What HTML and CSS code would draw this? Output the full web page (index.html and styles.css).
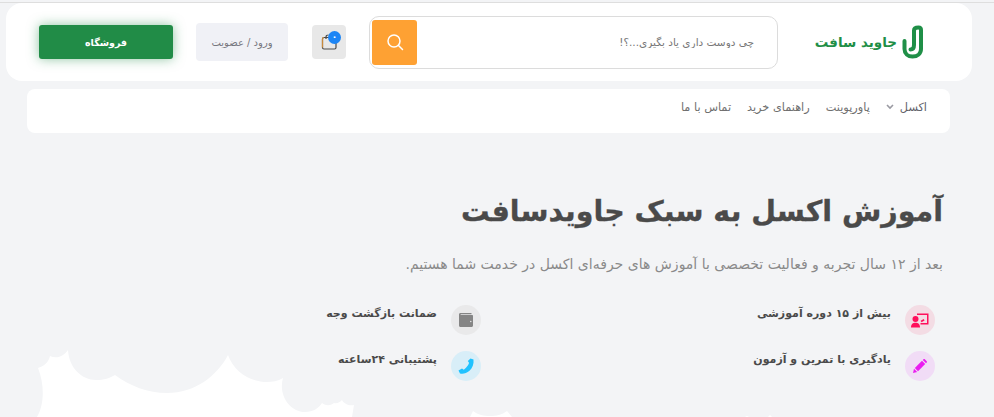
FILE: index.html
```html
<!DOCTYPE html>
<html lang="fa" dir="rtl">

<head>
    <meta charset="utf-8">
    <meta content="width=device-width, initial-scale=1.0" name="viewport">
    <title>جاوید سافت</title>
    <link rel="stylesheet" href="styles.css">
</head>

<body>

    <!-- Header -->
    <header class="site-header">
        <a class="logo" href="#">
            <svg class="logo-icon" width="24" height="34" viewBox="0 0 24 34" fill="none" stroke="#1f8f47" stroke-width="4" stroke-linecap="round">
                <path d="M3.500 16V24C3.500 28.500 7 31.500 11.500 31.500C16.500 31.500 20 28.500 20 24V5C20 3.500 19 2.500 17.500 2.500C15 2.500 13 3.500 13 5.500V20C13 23 11.500 24.500 9.500 24.500"/>
            </svg>
            <span class="logo-text">جاوید سافت</span>
        </a>

        <form class="search" onsubmit="return false;">
            <input class="search-input" type="text" placeholder="چی دوست داری یاد بگیری...؟!">
            <button class="search-button" type="submit" aria-label="جستجو">
                <svg width="18" height="18" viewBox="0 0 18 18" fill="none" stroke="#fff" stroke-width="1.500" stroke-linecap="round">
                    <circle cx="8" cy="8" r="6"/>
                    <path d="M12.500 12.500L16.500 16.500"/>
                </svg>
            </button>
        </form>

        <a class="cart" href="#">
            <svg width="16" height="16" viewBox="0 0 16 16" fill="none">
                <path d="M3 3.500H13.500C14.500 3.500 15 4 15 5V13.500C15 14.500 14.500 15 13.500 15H3C2 15 1.500 14.500 1.500 13.500V5C1.500 4 2 3.500 3 3.500Z" stroke="#4a4a4a" stroke-width="1.200"/>
                <path d="M1.500 13.500V5C1.500 4 2 3.500 3 3.500" stroke="#c98a3c" stroke-width="1.200"/>
                <path d="M5 5V3C5 1.800 6 1 7.500 1" stroke="#4a4a4a" stroke-width="1.200"/>
            </svg>
            <span class="cart-badge">۰</span>
        </a>

        <a class="login" href="#">ورود / عضویت</a>
        <a class="shop" href="#">فروشگاه</a>
    </header>

    <!-- Main menu -->
    <nav class="main-nav">
        <a class="has-menu" href="#">اکسل
            <svg width="8" height="6" viewBox="0 0 8 6" fill="none" stroke="#9a9aa2" stroke-width="1.600"><path d="M1 1L4 4L7 1"/></svg>
        </a>
        <a href="#">پاورپوینت</a>
        <a href="#">راهنمای خرید</a>
        <a href="#">تماس با ما</a>
    </nav>

    <!-- Hero -->
    <main class="hero">
        <h1>آموزش اکسل به سبک جاویدسافت</h1>
        <p class="lead">بعد از ۱۲ سال تجربه و فعالیت تخصصی با آموزش های حرفه‌ای اکسل در خدمت شما هستیم.</p>

        <div class="features">
            <div class="feature">
                <span class="feature-icon icon-pink">
                    <svg width="18" height="16" viewBox="0 0 18 16" fill="#ff0f5b">
                        <path d="M6 1.500H17.500V12.500H9.500V11H16V3H6Z"/>
                        <rect x="10" y="8" width="3.500" height="1.800" transform="rotate(-30 11 9)"/>
                        <circle cx="4.500" cy="7" r="3"/>
                        <path d="M0 15.500C0 12 2 10.800 4.500 10.800S9 12 9 15.500Z"/>
                    </svg>
                </span>
                <span class="feature-text">بیش از ۱۵ دوره آموزشی</span>
            </div>
            <div class="feature">
                <span class="feature-icon icon-gray">
                    <svg width="14" height="14" viewBox="0 0 14 14" fill="#858585">
                        <path d="M1.500 0H12.500V1.200H2C1.400 1.200 1.400 2 2 2H13C13.600 2 14 2.400 14 3V12.500C14 13.400 13.400 14 12.500 14H1.500C.6 14 0 13.400 0 12.500V1.500C0 .6.6 0 1.500 0Z"/>
                        <circle cx="11.800" cy="8.500" r=".7" fill="#eee"/>
                    </svg>
                </span>
                <span class="feature-text">ضمانت بازگشت وجه</span>
            </div>
            <div class="feature">
                <span class="feature-icon icon-purple">
                    <svg width="14" height="14" viewBox="0 0 14 14" fill="#ea1cf0">
                        <path d="M0 14L1 9.800L4.200 13Z"/>
                        <path d="M1.800 9L9 1.800L12.200 5L5 12.200Z"/>
                        <path d="M9.800 1L10.500 .3C10.900-.1 11.400-.1 11.800 .3L13.700 2.200C14.100 2.600 14.100 3.100 13.700 3.500L13 4.200Z"/>
                    </svg>
                </span>
                <span class="feature-text">یادگیری با تمرین و آزمون</span>
            </div>
            <div class="feature">
                <span class="feature-icon icon-blue">
                    <svg width="16" height="16" viewBox="0 0 16 16" fill="#1fc2ff">
                        <path d="M12.500 .5L15.500 1.500C16 6 14.500 10 11.500 12.800C8.500 15.500 5 16 2 15.500L.5 12.500L4 10.500L5.800 11.800C7.300 10.500 8.800 9 9.800 7.500C10.500 6.500 11 5.500 11 4.800L9.800 3Z"/>
                    </svg>
                </span>
                <span class="feature-text">پشتیبانی ۲۴ساعته</span>
            </div>
        </div>
    </main>

    <!-- Cloud shape at the bottom of the hero -->
    <svg class="clouds" width="994" height="67" viewBox="0 0 994 67" fill="#fff">
        <path d="M37 67C44 55 45 36 38 18C43 16 48 14 50 6C56 9 63 7 68 0C69 18 82 30 96 30C104 30 110 28 115 25C130 36 148 43 167 43C195 43 217 26 228 5C234 22 250 32 267 32C272 32 278 31 283 28C278 45 290 62 305 62C313 62 319 58 322 53C326 56 330 56 334 53C337 54 340 52 342 50C344 54 349 56 354 55L352 67Z"/>
        <path d="M470 67L473 61C478 65 484 66 490 66C496 66 502 65 507 61L512 67Z"/>
        <path d="M745 67L747 66L749 67Z"/>
        <path d="M768 67L770 65L772 67Z"/>
    </svg>

</body>

</html>
```

FILE: styles.css
```css
* {
    box-sizing: border-box;
}

html,
body {
    height: 100%;
}

body {
    font-family: "DejaVu Sans", sans-serif;
    margin: 0;
    padding: 3px 22px 0 6px;
    background-color: #f3f4f6;
    position: relative;
    overflow: hidden;
}

body::before {
    content: "";
    display: block;
    height: 1px;
    margin: -1px -22px 0 -6px;
    background-color: #dedede;
}

a {
    text-decoration: none;
    color: inherit;
}

.site-header {
    display: flex;
    align-items: center;
    height: 78px;
    padding: 0 47px 0 33px;
    background-color: #fff;
    border-radius: 16px;
}

.logo {
    display: flex;
    align-items: center;
    gap: 4px;
    width: 110px;
    margin-left: 37px;
    flex-shrink: 0;
}

.logo-icon {
    flex-shrink: 0;
}

.logo-text {
    font-size: 13.500px;
    font-weight: bold;
    color: #1f8f47;
    white-space: nowrap;
}

.search {
    display: flex;
    align-items: center;
    justify-content: space-between;
    width: 409px;
    height: 53px;
    padding: 0 21px 0 2px;
    margin-left: 23px;
    background-color: #fff;
    border: 1px solid #dcdcdc;
    border-radius: 10px;
}

.search-input {
    flex: 1;
    min-width: 0;
    border: 0;
    outline: 0;
    background: none;
    font-family: inherit;
    font-size: 10.500px;
}

.search-input::placeholder {
    color: #777;
    opacity: 1;
}

.search-button {
    display: flex;
    align-items: center;
    justify-content: center;
    width: 45px;
    height: 45px;
    padding: 0;
    border: 0;
    border-radius: 3px;
    background-color: #fea133;
}

.cart {
    display: flex;
    align-items: center;
    justify-content: center;
    position: relative;
    width: 34px;
    height: 34px;
    margin-left: 24px;
    background-color: #e8e8e8;
    border-radius: 4px;
}

.cart-badge {
    position: absolute;
    top: 6px;
    left: 16px;
    width: 13px;
    height: 13px;
    line-height: 12px;
    border-radius: 50%;
    background-color: #1c85f5;
    color: #fff;
    font-size: 9px;
    font-weight: bold;
    text-align: center;
}

.login {
    display: flex;
    align-items: center;
    justify-content: center;
    width: 92px;
    height: 38px;
    margin-left: 23px;
    background-color: #f0f1f6;
    border-radius: 4px;
    color: #77777f;
    font-size: 10px;
}

.shop {
    display: flex;
    align-items: center;
    justify-content: center;
    width: 134px;
    height: 34px;
    background-color: #218c47;
    border-radius: 3px;
    color: #fff;
    font-size: 9.500px;
    font-weight: bold;
    box-shadow: 0 0 12px rgba(33, 140, 71, 0.5);
}

.main-nav {
    display: flex;
    align-items: center;
    gap: 16px;
    width: 923px;
    height: 44px;
    margin: 8px 22px 0 0;
    padding: 0 23px 8px;
    background-color: #fff;
    border-radius: 8px;
    font-size: 11.300px;
    color: #6f6f6f;
}

.has-menu {
    display: flex;
    align-items: center;
    gap: 6px;
    color: #62626a;
}

.hero {
    padding: 58px 29px 0 0;
}

.hero h1 {
    margin: 0;
    font-size: 28.500px;
    line-height: 42px;
    font-weight: bold;
    color: #4a4a4a;
    -webkit-text-stroke: 0.3px #4a4a4a;
}

.lead {
    margin: 20px 0 0;
    font-size: 14px;
    line-height: 22px;
    color: #8a8a8a;
}

.features {
    display: grid;
    grid-template-columns: 454px 454px;
    row-gap: 16px;
    margin-top: 30px;
    padding-right: 8px;
}

.feature {
    display: flex;
    gap: 14px;
}

.feature-icon {
    display: flex;
    align-items: center;
    justify-content: center;
    flex-shrink: 0;
    width: 30px;
    height: 30px;
    border-radius: 50%;
}

.feature-text {
    font-size: 11px;
    font-weight: bold;
    line-height: 18px;
    color: #4a4a4a;
}

.icon-pink {
    background-color: #f3dce4;
}

.icon-gray {
    background-color: #e9e9ea;
}

.icon-purple {
    background-color: #f1dcf6;
}

.icon-blue {
    background-color: #d8eef8;
}

.clouds {
    position: absolute;
    left: 0;
    bottom: 0;
}
```
